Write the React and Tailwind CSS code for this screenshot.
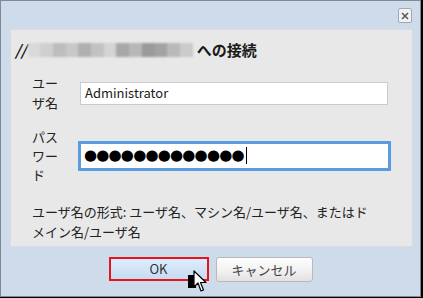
import React from "react";

const F = { fontFamily: '"Noto Sans CJK JP", "Noto Sans", sans-serif' };

function Blur() {
  const blocks = [
    "#d9d9d9", "#cfcfcf", "#bdbdbd", "#c8c8c8", "#b0b0b0", "#c2c2c2", "#d4d4d4",
    "#a8a8a8", "#b8b8b8", "#9a9a9a", "#a3a3a3", "#b9b9b9", "#cbcbcb",
  ];
  return (
    <div className="flex h-[14px] w-[165px] blur-[1.2px]">
      {blocks.map((c, i) => (
        <div key={i} className="h-full flex-1" style={{ backgroundColor: c }} />
      ))}
    </div>
  );
}

export default function App() {
  return (
    <div className="w-[423px] h-[298px] bg-black" style={F}>
      <div className="relative w-[421px] h-[297px] border border-[#7f8a98] bg-[#cedbea] flex flex-col">
        <div className="h-[28px] flex justify-end items-start pt-[7px] pr-[8px]">
          <div className="w-[14px] h-[15px] border border-[#a3a9b1] rounded-[2px] bg-[#f1f2f4] flex items-center justify-center">
            <svg width="8" height="8" viewBox="0 0 8 8">
              <path d="M1 1 L7 7 M7 1 L1 7" stroke="#5a5a5a" strokeWidth="1.6" />
            </svg>
          </div>
        </div>
        <div className="ml-[9px] mr-[7px] h-[218px] bg-[#e8e8e8] border border-[#d9dbde] flex flex-col pt-[10px]">
          <div className="flex items-center h-[20px] pl-[4px] text-[15px] font-bold text-[#1a1a1a]">
            <span className="italic mr-[1px]">//</span>
            <Blur />
            <span className="ml-[4px]">への接続</span>
          </div>
          <div className="flex items-center mt-[13px] pl-[21px]">
            <div className="w-[48px] text-[13px] leading-[20px] text-[#222]">
              ユー<br />ザ名
            </div>
            <div className="w-[308px] h-[23px] bg-white border border-[#c4ccd6] flex items-center pl-[4px] text-[13px] text-[#1a1a1a]">
              Administrator
            </div>
          </div>
          <div className="flex items-center mt-[14px] pl-[21px]">
            <div className="w-[46px] text-[13px] leading-[19px] text-[#222]">
              パス<br />ワー<br />ド
            </div>
            <div className="w-[313px] h-[30px] bg-white border-[3px] border-[#5b9be0] flex items-center pl-[3px]">
              <span className="text-[15px] leading-none text-black tracking-[-0.8px]" style={{ fontFamily: '"DejaVu Sans", sans-serif' }}>
                ●●●●●●●●●●●●●
              </span>
              <span className="w-[1px] h-[17px] bg-black ml-[2px]" />
            </div>
          </div>
          <div className="mt-[18px] pl-[21px] text-[13px] leading-[20px] text-[#222]">
            ユーザ名の形式: ユーザ名、マシン名/ユーザ名、またはド<br />メイン名/ユーザ名
          </div>
        </div>
        <div className="flex justify-center gap-[7px] mt-[10px]">
          <div className="w-[100px] h-[24px] border-2 border-[#e8141c] flex">
            <div className="flex-1 bg-gradient-to-b from-[#deedfb] to-[#c5dcf2] flex items-center justify-center text-[13px] text-[#333]">
              OK
            </div>
          </div>
          <div className="w-[97px] h-[25px] rounded-[3px] border border-[#b9b9b9] bg-gradient-to-b from-[#fdfdfd] via-[#f3f3f3] to-[#e2e2e2] flex items-center justify-center text-[13px] text-[#444]">
            キャンセル
          </div>
        </div>
        <div className="absolute left-[187px] top-[274px] w-[8px] h-[13px] bg-black" />
        <svg className="absolute left-[192px] top-[269px]" width="14" height="23" viewBox="0 0 14 23">
          <path d="M1 1 L1 17 L5 13 L8 21 L10.5 20 L7.5 12.5 L13 12.5 Z" fill="white" stroke="black" strokeWidth="1.2" strokeLinejoin="round" />
        </svg>
      </div>
    </div>
  );
}
